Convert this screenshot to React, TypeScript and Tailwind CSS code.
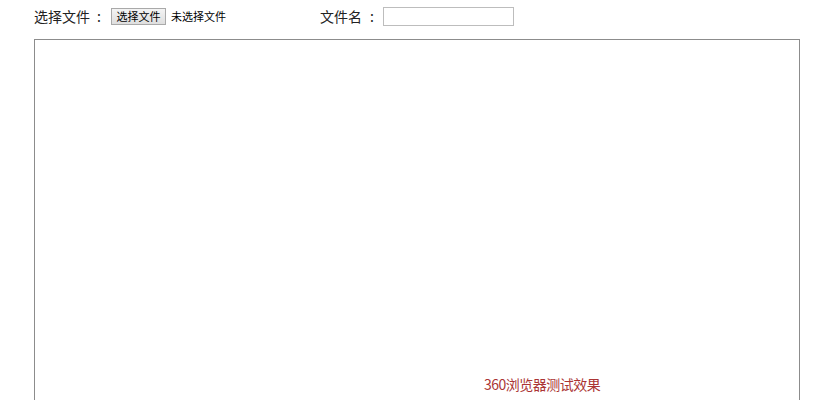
export default function App() {
  const cjk = { fontFamily: '"Noto Sans CJK SC", "Liberation Sans", sans-serif' };
  return (
    <div className="h-[400px] w-[826px] overflow-hidden bg-white text-[#222]" style={cjk}>
      {/* Top form row */}
      <div className="flex h-[32px] items-center pl-[34px]">
        <span className="text-[14px] leading-none">选择文件</span>
        <span className="ml-[7px] text-[14px] leading-none">:</span>
        <button className="ml-[10px] flex h-[17px] w-[55px] items-center justify-center border border-[#a9a9a9] bg-gradient-to-b from-[#f4f4f4] to-[#dedede] text-[11px] leading-none text-black">
          选择文件
        </button>
        <span className="ml-[5px] text-[11px] leading-none text-black">未选择文件</span>
        <span className="ml-[94px] text-[14px] leading-none">文件名</span>
        <span className="ml-[8px] text-[14px] leading-none">:</span>
        <input
          type="text"
          className="ml-[9px] h-[19px] w-[131px] border border-[#bdbdbd] bg-white outline-none"
        />
      </div>

      {/* Preview box */}
      <div className="ml-[34px] mt-[7px] h-[400px] w-[766px] border border-[#8c8c8c]">
        <div className="pl-[449px] pt-[335px] text-[14px] leading-[18px] tracking-[-0.5px] text-[#ab3434]">
          360浏览器测试效果
        </div>
      </div>
    </div>
  );
}
